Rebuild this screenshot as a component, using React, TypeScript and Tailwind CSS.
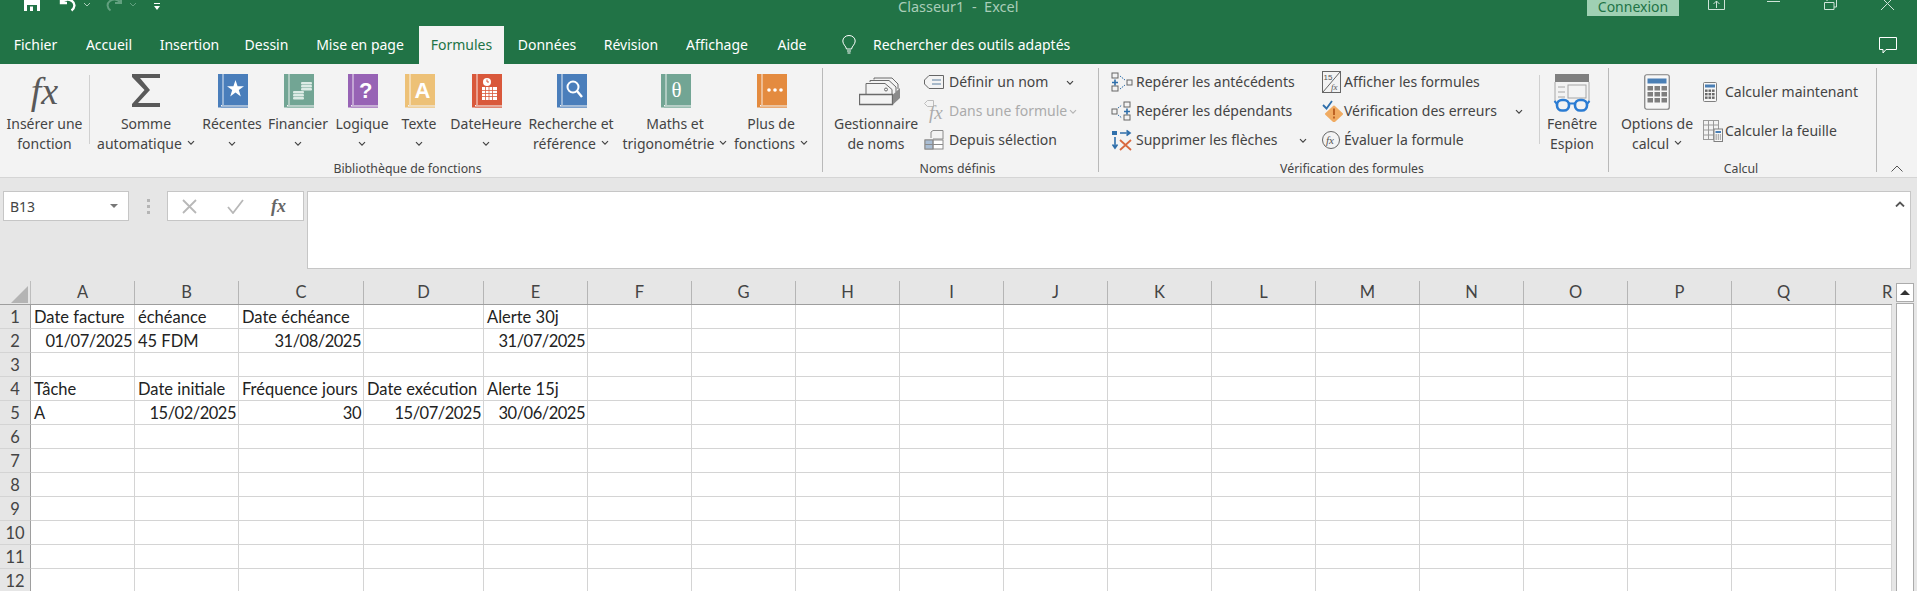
import { ReactNode } from "react";

const Chevron = ({ color = "#444" }: { color?: string }) => (
  <svg width="8" height="6" viewBox="0 0 8 6" fill="none" className="inline-block shrink-0">
    <path d="M1 1.2l3 3 3-3" stroke={color} strokeWidth="1.2" />
  </svg>
);

const Book = ({ color, children }: { color: string; children?: ReactNode }) => (
  <svg className="ml-[2px]" width="30" height="34" viewBox="0 0 30 34">
    <rect x="0" y="0" width="30" height="31" fill={color} />
    <rect x="0" y="31" width="3" height="2.5" fill={color} />
    <rect x="4.5" y="0" width="1" height="31" fill="#ffffff" opacity="0.85" />
    <rect x="4" y="31" width="26" height="1" fill={color} opacity="0.45" />
    <rect x="3" y="32.5" width="27" height="1.2" fill={color} />
    {children}
  </svg>
);

const SigmaIcon = () => (
  <svg width="28" height="33" viewBox="0 0 28 33">
    <path d="M0 0h28v4H8l10 12L6 29h22v4H0v-3l12.500-14L0 3z" fill="#595959" />
  </svg>
);

const NamesIcon = () => (
  <svg className="ml-[8px]" width="42" height="32" viewBox="0 0 42 32" fill="none" stroke="#6a6a6a">
    <path d="M15 5.500V4h18l6 6v5" />
    <path d="M11 8V6.500h19l7 6.500v5" fill="#f3f3f3" />
    <path d="M7 20V9.500h19l7 6V20" fill="#f3f3f3" />
    <circle cx="27" cy="15.500" r="1.500" />
    <path d="M.5 20.500h33v10H.5z" fill="#f3f3f3" strokeWidth="1.300" />
    <path d="M34 20.500l7-6.500v10l-7 6.500z" fill="#8a8a8a" stroke="none" />
  </svg>
);

const TagIcon = () => (
  <svg width="20" height="14" viewBox="0 0 20 14" fill="none" stroke="#666">
    <path d="M5 .5h14.500v13H5L.5 9V5z" />
    <path d="M8 5h9M8 9h9" stroke="#5c7f9f" />
  </svg>
);

const DisabledFxIcon = () => (
  <svg width="21" height="22" viewBox="0 0 21 22" fill="none" className="overflow-visible">
    <path d="M.5 3.500l3-3h6v6h-6z" stroke="#bdbdbd" />
    <text x="5" y="19" fontSize="19" fontStyle="italic" fill="#ababab" fontFamily="Liberation Serif, serif">
      fx
    </text>
  </svg>
);

const SelectionIcon = () => (
  <svg width="20" height="20" viewBox="0 0 20 20" fill="none" stroke="#8a8a8a">
    <rect x="1" y="10" width="18" height="9" fill="#ffffff" />
    <rect x="1" y="10" width="8" height="9" fill="#a9bdd3" />
    <path d="M1 14.500h18M9 10v9" />
    <path d="M7 8V2l2-1.500h10V9H9" fill="#f3f3f3" />
  </svg>
);

const TraceIcon = ({ dep }: { dep?: boolean }) => (
  <svg width="22" height="20" viewBox="0 0 22 20" fill="none">
    {dep ? (
      <>
        <rect x="1" y="8" width="5" height="5" stroke="#666" />
        <rect x="13" y="1" width="6" height="5" stroke="#666" />
        <rect x="13" y="14" width="6" height="5" stroke="#666" />
        <path d="M16 7.500v6M13 10.500h6" stroke="#2f6fab" strokeWidth="1.600" />
        <path d="M7 7l4-3M7 14l4 3" stroke="#2f6fab" strokeDasharray="1.500 1" />
      </>
    ) : (
      <>
        <rect x="1" y="1" width="6" height="5" stroke="#666" />
        <rect x="1" y="14" width="6" height="5" stroke="#666" />
        <rect x="16" y="8" width="5" height="5" stroke="#666" />
        <path d="M4 7.500v6M1 10.500h6" stroke="#2f6fab" strokeWidth="1.600" />
        <path d="M9 4l5 4M9 17l5-4" stroke="#2f6fab" strokeDasharray="1.500 1" />
      </>
    )}
  </svg>
);

const RemoveArrowsIcon = () => (
  <svg width="22" height="22" viewBox="0 0 22 22" fill="none">
    <path d="M1 2h5v4H1z" fill="#2f6fab" />
    <path d="M4 8v10M1.500 15.500L4 19l2.500-3.500" stroke="#2f6fab" strokeWidth="1.600" />
    <path d="M9 4h9M15.500 1.500L19 4l-3.500 2.500" stroke="#2f6fab" strokeWidth="1.600" />
    <path d="M9 11l11 10M20 11L9 21" stroke="#d9683f" strokeWidth="1.800" />
  </svg>
);

const ShowFormulasIcon = () => (
  <svg width="19" height="22" viewBox="0 0 19 22" fill="none" stroke="#666">
    <rect x="0.5" y="0.5" width="18" height="21" />
    <path d="M18 1L1 21" />
    <text x="1.500" y="9" fontSize="8" fill="#555" stroke="none" fontFamily="Liberation Sans, sans-serif">
      15
    </text>
    <text x="9" y="19" fontSize="9" fontStyle="italic" fill="#555" stroke="none" fontFamily="Liberation Serif, serif">
      fx
    </text>
  </svg>
);

const ErrorCheckIcon = () => (
  <svg width="22" height="22" viewBox="0 0 22 22" fill="none">
    <path d="M12 6.500l8 7.500-8 7.500-8-7.500z" fill="#f0ab62" stroke="#f0ab62" strokeWidth="2" strokeLinejoin="round" />
    <path d="M12 8.500v6.500M12 16.500v2" stroke="#b5561a" strokeWidth="1.700" />
    <path d="M1 5l3.500 3.500L10 1" stroke="#2f6fab" strokeWidth="1.800" />
  </svg>
);

const EvalIcon = () => (
  <svg width="18" height="18" viewBox="0 0 18 18" className="overflow-visible">
    <circle cx="9" cy="9" r="8.500" fill="none" stroke="#666" />
    <text x="4" y="13" fontSize="11" fontStyle="italic" fill="#555" fontFamily="Liberation Serif, serif">
      fx
    </text>
  </svg>
);

const WatchIcon = () => (
  <svg width="38" height="38" viewBox="0 0 38 38" fill="none">
    <rect x="2" y="0" width="34" height="8" fill="#7f7f7f" />
    <path d="M2 8v20M36 8v20" stroke="#a6a6a6" />
    <rect x="15" y="11" width="18" height="13" stroke="#a6a6a6" />
    <path d="M5 13h7M5 18h7M5 23h7" stroke="#a6a6a6" />
    <rect x="4" y="26" width="12" height="10.500" rx="5" stroke="#2b7cd3" strokeWidth="2.600" fill="#f3f3f3" />
    <rect x="22" y="26" width="12" height="10.500" rx="5" stroke="#2b7cd3" strokeWidth="2.600" fill="#f3f3f3" />
    <path d="M16 29.500h6M4 30L1.500 27M34 30l2.500-3" stroke="#2b7cd3" strokeWidth="2" />
  </svg>
);

const BigCalcIcon = () => (
  <svg width="26" height="36" viewBox="0 0 26 36">
    <rect x="0.75" y="0.75" width="24.500" height="34.500" rx="2" fill="#f7f7f7" stroke="#7f7f7f" strokeWidth="1.200" />
    <rect x="3.500" y="4.500" width="19" height="5" fill="#4a7fb5" />
    {[12, 18, 24].flatMap((y) =>
      [3.5, 10.5, 17.5].map((x) => <rect key={x + "-" + y} x={x} y={y} width="5.500" height="4.500" fill="#7f7f7f" />),
    )}
  </svg>
);

const SmallCalcIcon = () => (
  <svg width="14" height="20" viewBox="0 0 14 20">
    <rect x="0.5" y="0.5" width="13" height="19" rx="1" fill="#f7f7f7" stroke="#7f7f7f" />
    <rect x="2" y="2.500" width="10" height="3" fill="#4a7fb5" />
    {[7.5, 11, 14.5].flatMap((y) =>
      [2, 5.5, 9].map((x) => <rect key={x + "-" + y} x={x} y={y} width="2.600" height="2.400" fill="#6a6a6a" />),
    )}
  </svg>
);

const SheetCalcIcon = () => (
  <svg width="20" height="22" viewBox="0 0 20 22" fill="none" stroke="#9a9a9a">
    <rect x="0.5" y="0.5" width="15" height="19" />
    <path d="M0.500 5h15M0.500 10h15M0.500 15h15M5.500 1v19M10.500 1v19" />
    <rect x="11" y="9" width="8.500" height="12.500" fill="#f7f7f7" stroke="#7f7f7f" />
    <rect x="12.500" y="11" width="5.500" height="2" fill="#4a7fb5" stroke="none" />
    <path d="M12.500 15h5.500M12.500 17h5.500M12.500 19h5.500" strokeDasharray="1.400 .8" stroke="#6a6a6a" />
  </svg>
);

const LargeButton = ({
  width,
  icon,
  lines,
  chevron,
  chevronBelow,
}: {
  width: string;
  icon: ReactNode;
  lines: string[];
  chevron?: boolean;
  chevronBelow?: boolean;
}) => (
  <div className={`${width} shrink-0 flex flex-col items-center pt-[10px]`}>
    <div className="h-[40px] flex items-start justify-center">{icon}</div>
    {lines.map((l, i) => (
      <div key={l} className="h-[20px] leading-[20px] whitespace-nowrap text-center">
        {l}
        {chevron && i === lines.length - 1 && (
          <span className="ml-[5px] leading-[0] align-[2px]">
            <Chevron />
          </span>
        )}
      </div>
    ))}
    {chevronBelow && (
      <div className="h-[20px] leading-[18px]">
        <Chevron />
      </div>
    )}
  </div>
);

const SmallRow = ({
  icon,
  label,
  chevron,
  disabled,
  iconWidth,
  height,
}: {
  icon: ReactNode;
  label: string;
  chevron?: "end" | "near";
  disabled?: boolean;
  iconWidth: string;
  height: string;
}) => (
  <div className={`${height} flex items-center whitespace-nowrap ${disabled ? "text-[#ababab]" : ""}`}>
    <div className={`${iconWidth} shrink-0 flex items-center`}>{icon}</div>
    <span>{label}</span>
    {chevron && (
      <span className={chevron === "end" ? "ml-auto" : "ml-[2px]"}>
        <Chevron color={disabled ? "#b5b5b5" : "#444"} />
      </span>
    )}
  </div>
);

const Group = ({
  width,
  label,
  labelPad,
  children,
}: {
  width: string;
  label: string;
  labelPad: string;
  children: ReactNode;
}) => (
  <div className={`${width} shrink-0 flex items-stretch`}>
    <div className="flex-1 flex flex-col min-w-0">
      <div className="h-[94px] flex">{children}</div>
      <div className={`${labelPad} h-[20px] leading-[23px] text-center text-[12.3px] text-[#444]`}>{label}</div>
    </div>
    <div className="w-px my-[4px] mb-[5px] bg-[#b9b9b9]" />
  </div>
);

const tabs = [
  { name: "Fichier", w: "w-[71px]" },
  { name: "Accueil", w: "w-[76px]" },
  { name: "Insertion", w: "w-[85px]" },
  { name: "Dessin", w: "w-[69px]" },
  { name: "Mise en page", w: "w-[118px]" },
  { name: "Formules", w: "w-[85px]", active: true },
  { name: "Données", w: "w-[86px]" },
  { name: "Révision", w: "w-[82px]" },
  { name: "Affichage", w: "w-[90px]" },
  { name: "Aide", w: "w-[60px]" },
];

const columns = [
  { name: "A", w: "w-[104px]" },
  { name: "B", w: "w-[104px]" },
  { name: "C", w: "w-[125px]" },
  { name: "D", w: "w-[120px]" },
  { name: "E", w: "w-[104px]" },
  ...["F", "G", "H", "I", "J", "K", "L", "M", "N", "O", "P", "Q"].map((name) => ({ name, w: "w-[104px]" })),
  { name: "R", w: "w-[56px]" },
];

type Cell = { t: string; right?: boolean };
const cells: Record<string, Cell[]> = {
  1: [{ t: "Date facture" }, { t: "échéance" }, { t: "Date échéance" }, { t: "" }, { t: "Alerte 30j" }],
  2: [
    { t: "01/07/2025", right: true },
    { t: "45 FDM" },
    { t: "31/08/2025", right: true },
    { t: "" },
    { t: "31/07/2025", right: true },
  ],
  4: [{ t: "Tâche" }, { t: "Date initiale" }, { t: "Fréquence jours" }, { t: "Date exécution" }, { t: "Alerte 15j" }],
  5: [
    { t: "A" },
    { t: "15/02/2025", right: true },
    { t: "30", right: true },
    { t: "15/07/2025", right: true },
    { t: "30/06/2025", right: true },
  ],
};

const rows = [1, 2, 3, 4, 5, 6, 7, 8, 9, 10, 11, 12];

export default function App() {
  return (
    <div className="w-[1917px] h-[591px] overflow-hidden bg-[#e6e6e6] font-['Noto_Sans',sans-serif] text-[14px] text-[#444]">
      {/* title bar, cut off at the top of the shot */}
      <div className="h-[26px] bg-[#217346] flex overflow-hidden text-white">
        <svg className="ml-[24px] -mt-[5px] shrink-0" width="16" height="16" viewBox="0 0 16 16">
          <path d="M0 0h13l3 3v13H0z" fill="#fff" />
          <rect x="3" y="10" width="10" height="6" fill="#217346" />
          <rect x="6" y="11.500" width="3" height="4.500" fill="#fff" />
        </svg>
        <svg className="ml-[19px] -mt-[4px] shrink-0" width="18" height="18" viewBox="0 0 18 18" fill="none">
          <path d="M2 1v6h6M2.500 6.500C5 3.500 9 2.500 13 5c3.500 2.500 3 7-.5 9.500" stroke="#fff" strokeWidth="2.400" />
        </svg>
        <svg className="ml-[6px] mt-[2px] shrink-0" width="8" height="6" viewBox="0 0 8 6" fill="none">
          <path d="M1 1l3 3 3-3" stroke="#a9cdb8" />
        </svg>
        <svg className="ml-[14px] -mt-[4px] shrink-0" width="18" height="18" viewBox="0 0 18 18" fill="none">
          <path d="M16 1v6h-6M15.500 6.500C13 3.500 9 2.500 5 5c-3.500 2.500-3 7 .5 9.500" stroke="#62a07f" strokeWidth="2" />
        </svg>
        <svg className="ml-[6px] mt-[2px] shrink-0" width="8" height="6" viewBox="0 0 8 6" fill="none">
          <path d="M1 1l3 3 3-3" stroke="#62a07f" />
        </svg>
        <svg className="ml-[17px] mt-[3px] shrink-0" width="6" height="7" viewBox="0 0 6 7">
          <path d="M0 0h6v1H0zM0 3h6L3 7z" fill="#fff" />
        </svg>
        <div className="ml-[738px] w-[118px] shrink-0 -mt-[4px] leading-[20px] text-[14.5px] text-center whitespace-nowrap text-[#a9cdb8]">
          Classeur1 &nbsp;-&nbsp; Excel
        </div>
        <div className="ml-[571px] w-[92px] shrink-0 h-[16px] bg-[#9fd0b3] text-[#217346] text-center leading-[14px]">
          Connexion
        </div>
        <svg className="ml-[29px] shrink-0" width="17" height="10" viewBox="0 0 17 10" fill="none" stroke="#cfe3d8">
          <path d="M.5 0v9.500h16V0M8.500 8V1M5.500 4l3-3 3 3" />
        </svg>
        <div className="ml-[42px] mt-[1px] w-[13px] h-px bg-[#cfe3d8] shrink-0" />
        <svg className="ml-[44px] shrink-0" width="13" height="10" viewBox="0 0 13 10" fill="none" stroke="#cfe3d8">
          <path d="M3 0v1M.5 2.500h9.500v7H.5zM12.500 0v7H10" />
        </svg>
        <svg className="ml-[44px] -mt-[3px] shrink-0" width="13" height="13" viewBox="0 0 13 13" fill="none" stroke="#cfe3d8">
          <path d="M0 0l13 13M13 0L0 13" />
        </svg>
      </div>

      {/* tabs */}
      <div className="h-[38px] bg-[#217346] flex text-white">
        {tabs.map((t) => (
          <div
            key={t.name}
            className={`${t.w} shrink-0 text-center leading-[38px] ${t.active ? "bg-[#f3f3f3] text-[#217346]" : ""}`}
          >
            {t.name}
          </div>
        ))}
        <svg className="ml-[20px] mt-[9px] shrink-0" width="14" height="20" viewBox="0 0 14 20" fill="none" stroke="#fff">
          <path d="M4.500 14C4 11 .8 9.500.8 6a6.200 5.500 0 0 1 12.400 0c0 3.500-3.200 5-3.700 8z" />
          <path d="M5 16h4M5.500 18h3" />
        </svg>
        <div className="ml-[17px] leading-[38px] whitespace-nowrap">Rechercher des outils adaptés</div>
        <svg className="ml-auto mr-[20px] mt-[11px] shrink-0" width="18" height="17" viewBox="0 0 18 17" fill="none" stroke="#fff">
          <path d="M.5.500h17v12H7l-3 3.500v-3.500H.5z" />
        </svg>
      </div>

      {/* ribbon */}
      <div className="h-[114px] bg-[#f3f3f3] border-b border-[#d5d5d5] flex">
        <Group width="w-[823px]" labelPad="pr-[7px]" label="Bibliothèque de fonctions">
          <LargeButton
            width="w-[89px]"
            icon={
              <span className="text-[38px] leading-[34px] italic font-['Liberation_Serif',serif] text-[#595959]">fx</span>
            }
            lines={["Insérer une", "fonction"]}
          />
          <div className="w-px h-[69px] mt-[11px] bg-[#d0d0d0] shrink-0" />
          <LargeButton width="w-[112px]" icon={<SigmaIcon />} lines={["Somme", "automatique"]} chevron />
          <LargeButton
            width="w-[60px]"
            icon={
              <Book color="#4a7ebb">
                <path d="M17.500 6l2.100 6.200h6.400l-5.200 3.900 2 6.300-5.300-3.900-5.300 3.900 2-6.300-5.200-3.900h6.400z" fill="#fff" />
              </Book>
            }
            lines={["Récentes"]}
            chevronBelow
          />
          <LargeButton
            width="w-[72px]"
            icon={
              <Book color="#72a594">
                <g fill="#dcebe5">
                  <rect x="9" y="17" width="11" height="2.500" rx="1" />
                  <rect x="9" y="20" width="11" height="2.500" rx="1" />
                  <rect x="9" y="23" width="11" height="2.500" rx="1" />
                  <rect x="17" y="8" width="11" height="2.500" rx="1" />
                  <rect x="17" y="11" width="11" height="2.500" rx="1" />
                  <rect x="17" y="14" width="11" height="2.500" rx="1" />
                </g>
              </Book>
            }
            lines={["Financier"]}
            chevronBelow
          />
          <LargeButton
            width="w-[56px]"
            icon={
              <Book color="#9763b5">
                <text x="11" y="24" fontSize="22" fontWeight="700" fill="#fff" fontFamily="Liberation Sans, sans-serif">
                  ?
                </text>
              </Book>
            }
            lines={["Logique"]}
            chevronBelow
          />
          <LargeButton
            width="w-[58px]"
            icon={
              <Book color="#edc177">
                <text x="9.500" y="24" fontSize="22" fontWeight="700" fill="#fff" fontFamily="Liberation Sans, sans-serif">
                  A
                </text>
              </Book>
            }
            lines={["Texte"]}
            chevronBelow
          />
          <LargeButton
            width="w-[76px]"
            icon={
              <Book color="#d9583b">
                <circle cx="15" cy="8" r="4" fill="#fff" />
                <path d="M15 5.500V8h2" stroke="#d9583b" fill="none" />
                <rect x="10" y="13" width="15" height="13" fill="#fff" />
                <path d="M10 16.500h15M10 19.500h15M10 22.500h15M13.500 13v13M17 13v13M20.500 13v13" stroke="#d9583b" strokeWidth=".8" />
              </Book>
            }
            lines={["DateHeure"]}
            chevronBelow
          />
          <LargeButton
            width="w-[94px]"
            icon={
              <Book color="#4a7ebb">
                <circle cx="16" cy="13" r="5.500" fill="none" stroke="#fff" strokeWidth="2" />
                <path d="M20 17l5 6" stroke="#fff" strokeWidth="2.400" />
              </Book>
            }
            lines={["Recherche et", "référence"]}
            chevron
          />
          <LargeButton
            width="w-[114px]"
            icon={
              <Book color="#72a594">
                <text x="10.500" y="23" fontSize="21" fill="#fff" fontFamily="Liberation Serif, serif">
                  θ
                </text>
              </Book>
            }
            lines={["Maths et", "trigonométrie"]}
            chevron
          />
          <LargeButton
            width="w-[78px]"
            icon={
              <Book color="#e48b3f">
                <circle cx="12" cy="16" r="1.800" fill="#fff" />
                <circle cx="18" cy="16" r="1.800" fill="#fff" />
                <circle cx="24" cy="16" r="1.800" fill="#fff" />
              </Book>
            }
            lines={["Plus de", "fonctions"]}
            chevron
          />
        </Group>

        <Group width="w-[276px]" labelPad="pr-[6px]" label="Noms définis">
          <LargeButton width="ml-[5px] w-[96px]" icon={<NamesIcon />} lines={["Gestionnaire", "de noms"]} />
          <div className="w-[150px] pt-[3px]">
            <SmallRow iconWidth="w-[25px]" height="h-[29px]" icon={<TagIcon />} label="Définir un nom" chevron="end" />
            <SmallRow
              iconWidth="w-[25px]"
              height="h-[29px]"
              icon={<DisabledFxIcon />}
              label="Dans une formule"
              chevron="near"
              disabled
            />
            <SmallRow iconWidth="w-[25px]" height="h-[29px]" icon={<SelectionIcon />} label="Depuis sélection" />
          </div>
        </Group>

        <Group width="w-[510px]" labelPad="pr-[3px]" label="Vérification des formules">
          <div className="ml-[12px] w-[196px] pt-[3px]">
            <SmallRow iconWidth="w-[25px]" height="h-[29px]" icon={<TraceIcon />} label="Repérer les antécédents" />
            <SmallRow iconWidth="w-[25px]" height="h-[29px]" icon={<TraceIcon dep />} label="Repérer les dépendants" />
            <SmallRow
              iconWidth="w-[25px]"
              height="h-[29px]"
              icon={<RemoveArrowsIcon />}
              label="Supprimer les flèches"
              chevron="end"
            />
          </div>
          <div className="ml-[15px] w-[201px] pt-[3px]">
            <SmallRow iconWidth="w-[22px]" height="h-[29px]" icon={<ShowFormulasIcon />} label="Afficher les formules" />
            <SmallRow
              iconWidth="w-[22px]"
              height="h-[29px]"
              icon={<ErrorCheckIcon />}
              label="Vérification des erreurs"
              chevron="end"
            />
            <SmallRow iconWidth="w-[22px]" height="h-[29px]" icon={<EvalIcon />} label="Évaluer la formule" />
          </div>
          <div className="ml-[16px] w-px h-[69px] mt-[11px] bg-[#d0d0d0] shrink-0" />
          <LargeButton width="w-[64px]" icon={<WatchIcon />} lines={["Fenêtre", "Espion"]} />
        </Group>

        <Group width="w-[268px]" labelPad="pr-[3px]" label="Calcul">
          <LargeButton width="ml-[2px] w-[92px]" icon={<BigCalcIcon />} lines={["Options de", "calcul"]} chevron />
          <div className="pt-[8px]">
            <SmallRow iconWidth="w-[22px]" height="h-[39px]" icon={<SmallCalcIcon />} label="Calculer maintenant" />
            <SmallRow iconWidth="w-[22px]" height="h-[39px]" icon={<SheetCalcIcon />} label="Calculer la feuille" />
          </div>
        </Group>

        <div className="flex-1 flex justify-center items-end pb-[5px]">
          <svg width="12" height="7" viewBox="0 0 12 7" fill="none" stroke="#555">
            <path d="M.5 6.500L6 1l5.500 5.500" />
          </svg>
        </div>
      </div>

      {/* formula bar */}
      <div className="h-[103px] pt-[13px] pl-[3px] flex items-start">
        <div className="w-[126px] h-[30px] bg-white border border-[#c6c6c6] flex items-center justify-between pl-[6px] pr-[10px] text-[#444]">
          <span>B13</span>
          <svg width="8" height="4" viewBox="0 0 8 4">
            <path d="M0 0h8L4 4z" fill="#777" />
          </svg>
        </div>
        <div className="ml-[18px] mt-[8px] w-[3px] h-[15px] shrink-0 flex flex-col justify-between">
          <div className="h-[3px] bg-[#b5b5b5]" />
          <div className="h-[3px] bg-[#b5b5b5]" />
          <div className="h-[3px] bg-[#b5b5b5]" />
        </div>
        <div className="ml-[17px] w-[137px] h-[30px] bg-white border border-[#c6c6c6] flex items-center">
          <svg className="ml-[14px]" width="15" height="15" viewBox="0 0 15 15" fill="none" stroke="#b8b8b8" strokeWidth="1.800">
            <path d="M1 1l13 13M14 1L1 14" />
          </svg>
          <svg className="ml-[30px]" width="17" height="15" viewBox="0 0 17 15" fill="none" stroke="#b8b8b8" strokeWidth="1.800">
            <path d="M1 8l5 6L16 1" />
          </svg>
          <span className="ml-[27px] font-['Liberation_Serif',serif] italic font-bold text-[18px] leading-[20px] text-[#666]">
            fx
          </span>
        </div>
        <div className="ml-[3px] w-[1604px] h-[78px] bg-white border border-[#c6c6c6] flex justify-end pt-[9px] pr-[5px]">
          <svg width="10" height="6" viewBox="0 0 10 6" fill="none" stroke="#555" strokeWidth="1.800">
            <path d="M1 5.500L5 1.500l4 4" />
          </svg>
        </div>
      </div>

      {/* sheet */}
      <div className="flex font-['Lato',sans-serif] text-[16.5px] text-[#222]">
        <div className="w-[1892px] shrink-0">
          <div className="h-[24px] flex border-b border-[#9e9e9e]">
            <div className="w-[31px] shrink-0 border-r border-[#bdbdbd] flex items-end justify-end pr-[2px] pb-[1px]">
              <svg width="17" height="17" viewBox="0 0 17 17">
                <path d="M17 0v17H0z" fill="#b4b4b4" />
              </svg>
            </div>
            {columns.map((c) => (
              <div
                key={c.name}
                className={`${c.w} shrink-0 leading-[23px] text-[#444] ${
                  c.name === "R" ? "pl-[46px] text-left" : "border-r border-[#b5b5b5] text-center"
                }`}
              >
                {c.name}
              </div>
            ))}
          </div>
          {rows.map((r) => (
            <div key={r} className="h-[24px] flex">
              <div className="w-[31px] shrink-0 border-r border-b border-r-[#9e9e9e] border-b-[#d4d4d4] text-center leading-[24px] text-[#444]">
                {r}
              </div>
              {columns.map((c, i) => {
                const cell = cells[r]?.[i];
                return (
                  <div
                    key={c.name}
                    className={`${c.w} shrink-0 bg-white border-r border-b border-[#d4d4d4] leading-[25px] pl-[3px] pr-[2px] whitespace-nowrap overflow-hidden ${
                      cell?.right ? "text-right tracking-[-0.5px]" : ""
                    }`}
                  >
                    {cell?.t}
                  </div>
                );
              })}
            </div>
          ))}
        </div>
        <div className="ml-[4px] w-[18px] pt-[2px] shrink-0">
          <div className="h-[19px] bg-white border border-[#ababab] flex items-center justify-center">
            <svg width="10" height="5" viewBox="0 0 10 5">
              <path d="M0 5L5 0l5 5z" fill="#333" />
            </svg>
          </div>
          <div className="h-[300px] bg-white border border-[#ababab] mt-[1px]" />
        </div>
      </div>
    </div>
  );
}
